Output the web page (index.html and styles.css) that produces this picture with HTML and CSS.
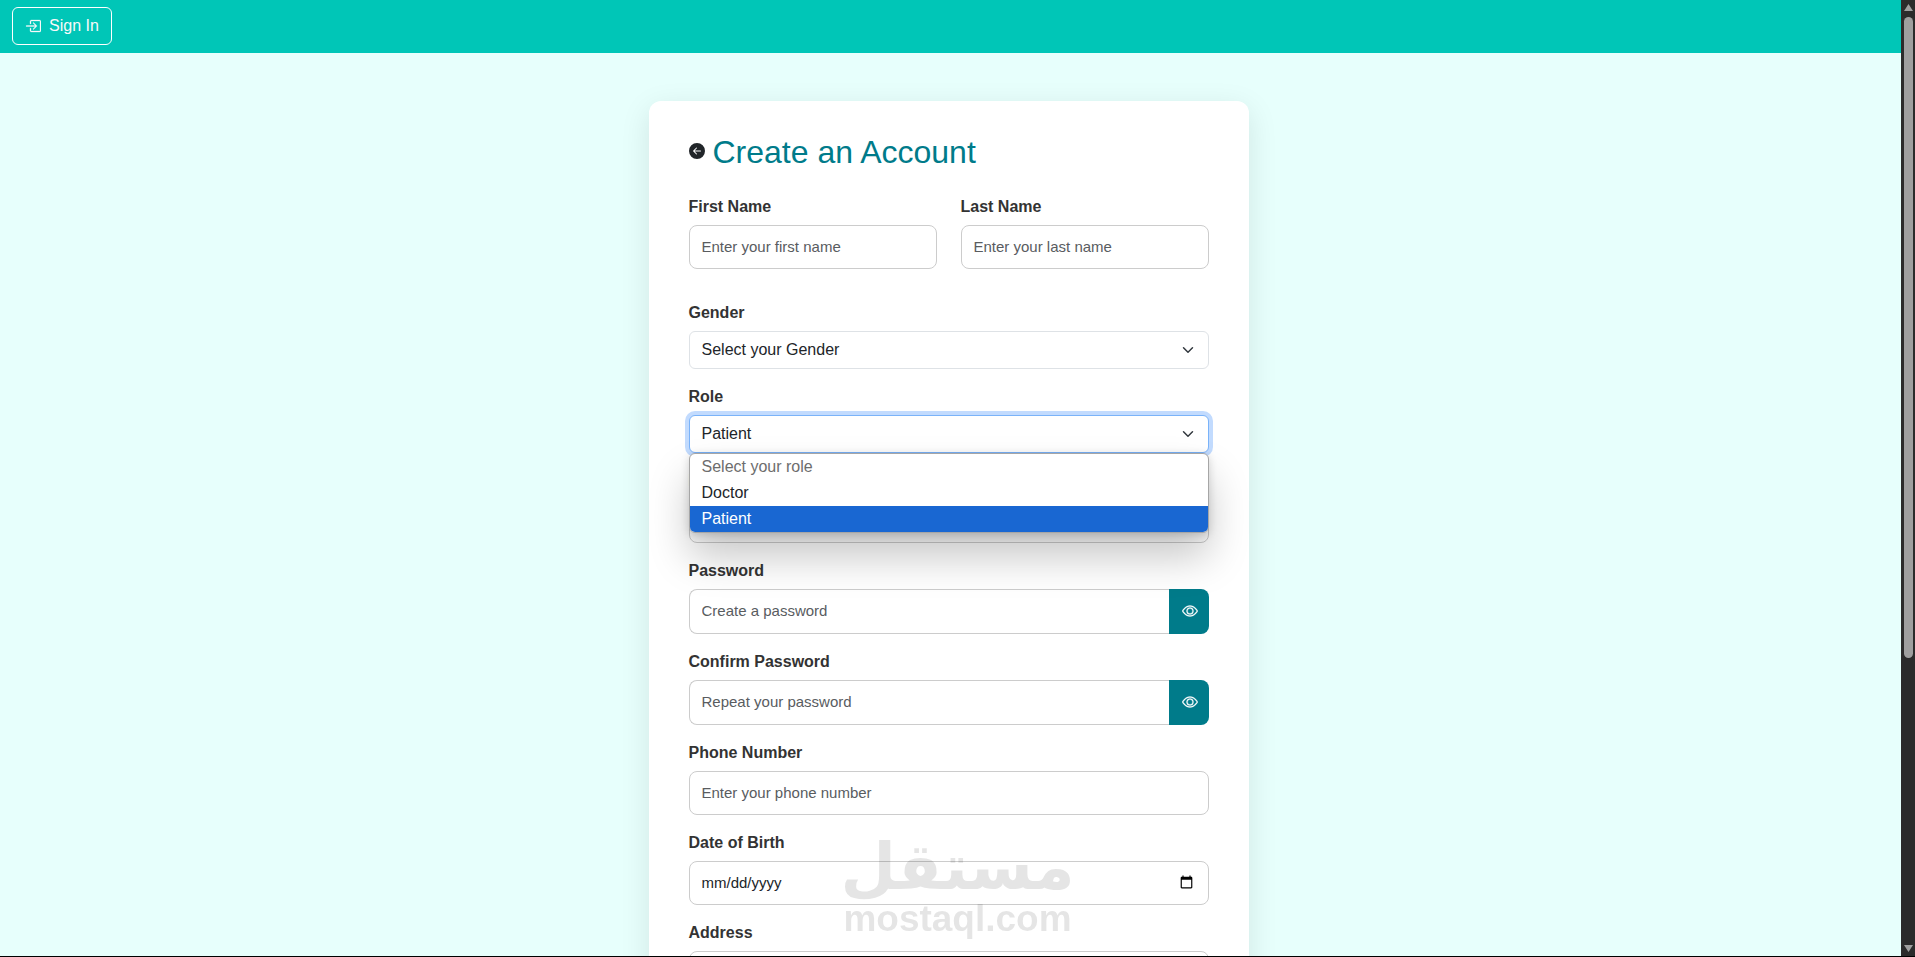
FILE: index.html
```html
<!DOCTYPE html>
<html lang="en">
<head>
  <meta charset="UTF-8">
  <meta name="viewport" content="width=device-width, initial-scale=1.0">
  <title>Create an Account</title>
  <link rel="stylesheet" href="styles.css">
</head>
<body>
  <div class="page">
    <nav class="navbar">
      <a class="btn-signin" href="#">
        <svg class="icon" viewBox="0 0 16 16" aria-hidden="true">
          <path d="M6 3.5a.5.5 0 0 1 .5-.5h8a.5.5 0 0 1 .5.5v9a.5.5 0 0 1-.5.5h-8a.5.5 0 0 1-.5-.5v-2a.5.5 0 0 0-1 0v2A1.5 1.5 0 0 0 6.5 14h8a1.5 1.5 0 0 0 1.5-1.5v-9A1.5 1.5 0 0 0 14.5 2h-8A1.5 1.5 0 0 0 5 3.5v2a.5.5 0 0 0 1 0z"/>
          <path d="M11.854 8.354a.5.5 0 0 0 0-.708l-3-3a.5.5 0 1 0-.708.708L10.293 7.5H1.5a.5.5 0 0 0 0 1h8.793l-2.147 2.146a.5.5 0 0 0 .708.708z"/>
        </svg>
        Sign In
      </a>
    </nav>

    <main class="content">
      <form class="card">
        <div class="card-title">
          <a class="back" href="#" aria-label="Back">
            <svg class="icon" viewBox="0 0 16 16" aria-hidden="true">
              <path d="M8 0a8 8 0 1 0 0 16A8 8 0 0 0 8 0m3.5 7.5a.5.5 0 0 1 0 1H5.707l2.147 2.146a.5.5 0 0 1-.708.708l-3-3a.5.5 0 0 1 0-.708l3-3a.5.5 0 1 1 .708.708L5.707 7.5z"/>
            </svg>
          </a>
          <h2>Create an Account</h2>
        </div>

        <!-- Names -->
        <div class="row">
          <div class="field">
            <label for="first-name">First Name</label>
            <input class="control" type="text" id="first-name" placeholder="Enter your first name">
          </div>
          <div class="field">
            <label for="last-name">Last Name</label>
            <input class="control" type="text" id="last-name" placeholder="Enter your last name">
          </div>
        </div>

        <div class="field">
          <label for="gender">Gender</label>
          <select class="select" id="gender">
            <option selected>Select your Gender</option>
            <option>Male</option>
            <option>Female</option>
          </select>
        </div>

        <!-- Role, with its list open -->
        <div class="field">
          <label for="role">Role</label>
          <div class="select-wrap">
            <select class="select is-open" id="role">
              <option disabled>Select your role</option>
              <option>Doctor</option>
              <option selected>Patient</option>
            </select>
            <ul class="options" role="listbox" aria-label="Role">
              <li class="option disabled" role="option" aria-disabled="true">Select your role</li>
              <li class="option" role="option">Doctor</li>
              <li class="option active" role="option" aria-selected="true">Patient</li>
            </ul>
          </div>
        </div>

        <div class="field">
          <label for="email">Email</label>
          <input class="control" type="email" id="email">
        </div>

        <div class="field">
          <label for="password">Password</label>
          <div class="input-group">
            <input class="control" type="password" id="password" placeholder="Create a password">
            <button class="btn-eye" type="button" aria-label="Show password">
              <svg class="icon" viewBox="0 0 16 16" aria-hidden="true">
                <path d="M16 8s-3-5.5-8-5.5S0 8 0 8s3 5.5 8 5.5S16 8 16 8M1.173 8a13 13 0 0 1 1.66-2.043C4.12 4.668 5.88 3.5 8 3.5s3.879 1.168 5.168 2.457A13 13 0 0 1 14.828 8q-.086.13-.195.288c-.335.48-.83 1.12-1.465 1.755C11.879 11.332 10.119 12.5 8 12.5s-3.879-1.168-5.168-2.457A13 13 0 0 1 1.172 8z"/>
                <path d="M8 5.5a2.5 2.5 0 1 0 0 5 2.5 2.5 0 0 0 0-5M4.5 8a3.5 3.5 0 1 1 7 0 3.5 3.5 0 0 1-7 0"/>
              </svg>
            </button>
          </div>
        </div>

        <div class="field">
          <label for="confirm">Confirm Password</label>
          <div class="input-group">
            <input class="control" type="password" id="confirm" placeholder="Repeat your password">
            <button class="btn-eye" type="button" aria-label="Show password">
              <svg class="icon" viewBox="0 0 16 16" aria-hidden="true">
                <path d="M16 8s-3-5.5-8-5.5S0 8 0 8s3 5.5 8 5.5S16 8 16 8M1.173 8a13 13 0 0 1 1.66-2.043C4.12 4.668 5.88 3.5 8 3.5s3.879 1.168 5.168 2.457A13 13 0 0 1 14.828 8q-.086.13-.195.288c-.335.48-.83 1.12-1.465 1.755C11.879 11.332 10.119 12.5 8 12.5s-3.879-1.168-5.168-2.457A13 13 0 0 1 1.172 8z"/>
                <path d="M8 5.5a2.5 2.5 0 1 0 0 5 2.5 2.5 0 0 0 0-5M4.5 8a3.5 3.5 0 1 1 7 0 3.5 3.5 0 0 1-7 0"/>
              </svg>
            </button>
          </div>
        </div>

        <div class="field">
          <label for="phone">Phone Number</label>
          <input class="control" type="tel" id="phone" placeholder="Enter your phone number">
        </div>

        <div class="field">
          <label for="dob">Date of Birth</label>
          <input class="control" type="date" id="dob">
        </div>

        <div class="field">
          <label for="address">Address</label>
          <input class="control" type="text" id="address">
        </div>
      </form>
    </main>
  </div>

  <!-- Window scrollbar -->
  <div class="scrollbar" aria-hidden="true">
    <svg class="arrow" viewBox="0 0 9 7"><path d="M4.5 0 9 7H0z"/></svg>
    <div class="track"><div class="thumb"></div></div>
    <svg class="arrow" viewBox="0 0 9 7"><path d="M4.5 7 9 0H0z"/></svg>
  </div>

  <div class="watermark">
    <span class="watermark-ar" lang="ar" dir="rtl">مستقل</span>
    <span class="watermark-en">mostaql.com</span>
  </div>
</body>
</html>
```

FILE: styles.css
```css
* {
  box-sizing: border-box;
}
body {
  display: flex;
  height: 100vh;
  margin: 0;
  overflow: hidden;
  border-bottom: 1px solid #000;
  background-color: #e7fffc;
  color: #212529;
  font-family: "Liberation Sans", Arial, sans-serif;
  font-size: 16px;
  line-height: 24px;
}
.page {
  flex: 1;
  min-width: 0;
  overflow: hidden;
}
.icon {
  display: block;
  width: 16px;
  height: 16px;
  fill: currentColor;
}

/* Navbar */
.navbar {
  display: flex;
  padding: 7px 12px 8px;
  background-color: #00c6b7;
}
.btn-signin {
  display: flex;
  align-items: center;
  gap: 8px;
  padding: 6px 12px;
  border: 1px solid #fff;
  border-radius: 6px;
  color: #f8f9fa;
  text-decoration: none;
}
.btn-signin .icon, .btn-eye .icon {
  stroke: currentColor;
  stroke-width: 0.3;
}

/* Card */
.content {
  padding: 48px 12px 48px 8px;
}
.card {
  max-width: 600px;
  margin: 0 auto;
  padding: 32px 40px;
  border-radius: 12px;
  background-color: #fff;
  box-shadow: 0 8px 30px rgba(0, 0, 0, 0.1);
}
.card-title {
  display: flex;
  align-items: center;
  gap: 8px;
  margin-bottom: 24px;
}
.card-title h2 {
  margin: 0;
  color: #007b8a;
  font-size: 32px;
  font-weight: 500;
  line-height: 38px;
}
.back {
  padding-bottom: 2px;
  color: #212529;
}

/* Form */
.row {
  display: grid;
  grid-template-columns: 1fr 1fr;
  gap: 24px;
  margin-bottom: 32px;
}
.row .field {
  margin-bottom: 0;
}
.field {
  margin-bottom: 16px;
}
label {
  display: block;
  margin-bottom: 6px;
  color: #333;
  font-weight: bold;
}
.control, .select {
  display: block;
  width: 100%;
  padding: 0 12px 2px;
  background-color: #fff;
  color: #212529;
  font-family: inherit;
}
.control {
  height: 44px;
  border: 1px solid #ccc;
  border-radius: 8px;
  font-size: 15px;
}
.control::placeholder {
  color: #595c5f;
}
.control::-webkit-datetime-edit-month-field,
.control::-webkit-datetime-edit-day-field,
.control::-webkit-datetime-edit-year-field,
.control::-webkit-datetime-edit-text {
  padding: 0;
}
.select {
  height: 38px;
  appearance: none;
  border: 1px solid #dee2e6;
  border-radius: 6px;
  background-image: url("data:image/svg+xml,%3csvg xmlns='http://www.w3.org/2000/svg' viewBox='0 0 16 16'%3e%3cpath fill='none' stroke='%23343a40' stroke-linecap='round' stroke-linejoin='round' stroke-width='2' d='m2 5 6 6 6-6'/%3e%3c/svg%3e");
  background-repeat: no-repeat;
  background-position: right 12px center;
  background-size: 16px 12px;
  font-size: 16px;
}
.select.is-open {
  border-color: #7ab3f9;
  box-shadow: 0 0 0 4px #c2dbfe;
}
.select-wrap {
  position: relative;
}
.options {
  position: absolute;
  top: 100%;
  left: 0;
  right: 0;
  margin: 0;
  padding: 0;
  overflow: hidden;
  border: 1px solid #a6a6a6;
  border-radius: 6px;
  background-color: #fff;
  box-shadow: 0 24px 40px rgba(0, 0, 0, 0.22), 0 2px 8px rgba(0, 0, 0, 0.16);
  list-style: none;
}
.option {
  padding: 0 12px;
  line-height: 26px;
}
.option.disabled {
  color: #6d6d6d;
}
.option.active {
  background-color: #1967d2;
  color: #fff;
}
.input-group {
  display: flex;
  height: 45px;
}
.input-group .control {
  flex: 1;
  height: auto;
  border-right: 0;
  border-radius: 8px 0 0 8px;
}
.btn-eye {
  padding: 0 11px 2px 13px;
  border: 0;
  border-radius: 0 8px 8px 0;
  background-color: #007b8a;
  color: #fff;
}

/* Scrollbar */
.scrollbar {
  display: flex;
  flex-direction: column;
  align-items: center;
  gap: 6px;
  width: 14px;
  padding: 4px 2px 4px 3px;
  background-color: #2b2b2b;
}
.arrow {
  width: 9px;
  height: 7px;
  fill: #9f9f9f;
}
.track {
  flex: 1;
  width: 9px;
}
.thumb {
  height: 69.5%;
  border-radius: 5px;
  background-color: #9f9f9f;
}

/* Watermark */
.watermark {
  position: fixed;
  right: 0;
  bottom: 18px;
  left: 0;
  display: flex;
  flex-direction: column;
  align-items: center;
  color: #000;
  font-weight: bold;
  opacity: 0.1;
  pointer-events: none;
}
.watermark-ar {
  font-family: "DejaVu Sans", sans-serif;
  font-size: 64px;
  line-height: 64px;
}
.watermark-en {
  font-size: 37px;
  line-height: 40px;
}
```
